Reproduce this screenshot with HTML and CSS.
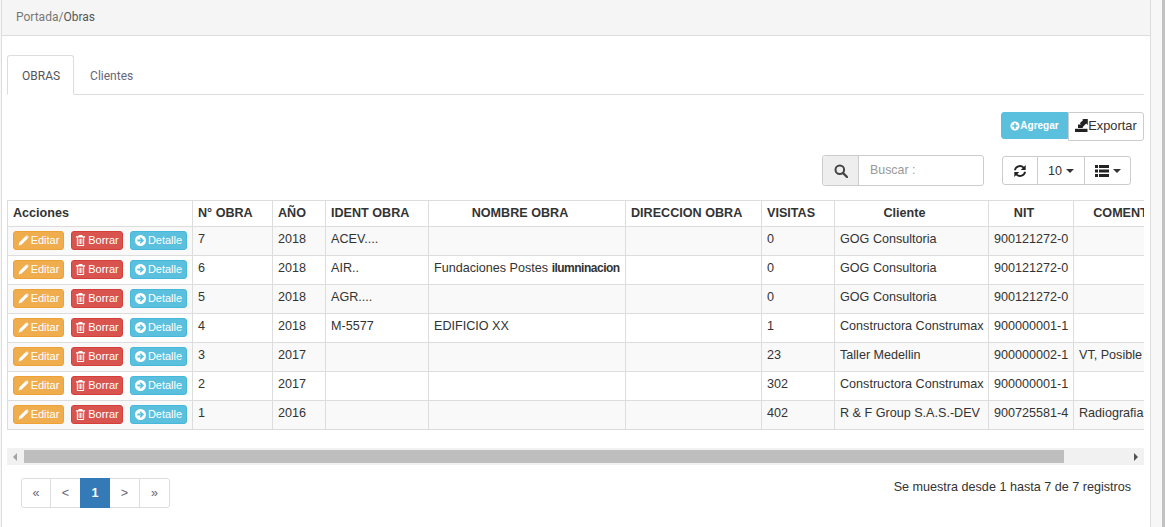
FILE: index.html
```html
<!DOCTYPE html>
<html lang="es">
<head>
<meta charset="utf-8">
<title>Obras</title>
<link rel="stylesheet" href="styles.css">
</head>
<body>
<svg class="defs" aria-hidden="true">
  <symbol id="i-pencil" viewBox="0 0 12 12"><path d="M8.800.8 11.200 3.200 4 10.400 .6 11.400 1.600 8zM9.800.2l2 2-.5.5-2-2z" fill="currentColor"/></symbol>
  <symbol id="i-trash" viewBox="0 0 12 12"><path fill-rule="evenodd" d="M4.200 0h3.600l.7 1.400H11v1.200H10V11a1 1 0 0 1-1 1H3a1 1 0 0 1-1-1V2.600H1V1.400h2.500zM3.100 2.600V10.900H8.900V2.600zM4 4h.9v5.800H4zM5.550 4h.9v5.800h-.9zM7.100 4H8v5.800h-.9z" fill="currentColor"/></symbol>
  <symbol id="i-circle-right" viewBox="0 0 12 12"><path fill-rule="evenodd" d="M6 0a6 6 0 1 1 0 12A6 6 0 0 1 6 0zM6.300 2.400 5.100 3.600 6.600 5H2.600V7H6.600L5.100 8.400 6.300 9.600 9.900 6z" fill="currentColor"/></symbol>
  <symbol id="i-circle-plus" viewBox="0 0 12 12"><path fill-rule="evenodd" d="M6 .5a5.500 5.500 0 1 1 0 11 5.500 5.500 0 0 1 0-11zM5 2.700V5H2.700V7H5V9.300H7V7H9.300V5H7V2.700z" fill="currentColor"/></symbol>
</svg>

<main class="panel">
  <nav class="crumbs"><span class="crumb-link">Portada/</span>Obras</nav>

  <div class="content">
    <ul class="tabs">
      <li class="tab tab-active">OBRAS</li>
      <li class="tab">Clientes</li>
    </ul>

    <div class="actions">
      <button class="add-btn"><svg class="ic-add"><use href="#i-circle-plus"/></svg>Agregar</button>
      <button class="export-btn">
        <svg class="ic-export" viewBox="0 0 13 13"><path d="M0 9.800h12.500V13H0z" fill="currentColor"/><path d="M3 9V5.500H6L4.800 4.300 8.400 0.800 6.800.1H12.800V6L11.200 4.600 7.800 8V9z" fill="currentColor"/></svg>Exportar
      </button>
    </div>

    <div class="tools">
      <div class="search">
        <span class="search-addon"><svg class="ic-search" viewBox="0 0 14 14"><circle cx="5.800" cy="5.800" r="4.300" fill="none" stroke="currentColor" stroke-width="2"/><path d="M9 9l4 4" stroke="currentColor" stroke-width="2.400" stroke-linecap="round"/></svg></span>
        <span class="search-input">Buscar :</span>
      </div>
      <div class="btn-group">
        <span class="tool-btn tool-refresh"><svg class="ic-refresh" viewBox="0 0 14 14"><path d="M1 6.300A6 6 0 0 1 11 2.700L12.700 1V6H7.700L9.700 4A4.200 4.200 0 0 0 2.900 6.300zM13 7.700A6 6 0 0 1 3 11.300L1.300 13V8H6.300L4.300 10A4.200 4.200 0 0 0 11.100 7.700z" fill="currentColor"/></svg></span>
        <span class="tool-btn tool-size">10<i class="caret"></i></span>
        <span class="tool-btn tool-cols"><svg class="ic-list" viewBox="0 0 14 12"><path d="M0 0h3v3H0zM4 0h10v3H4zM0 4.500h3v3H0zM4 4.500h10v3H4zM0 9h3v3H0zM4 9h10v3H4z" fill="currentColor"/></svg><i class="caret"></i></span>
      </div>
    </div>

    <div class="table-scroll">
      <table class="grid">
        <colgroup>
          <col class="c-acc"><col class="c-num"><col class="c-year"><col class="c-ident"><col class="c-name"><col class="c-dir"><col class="c-vis"><col class="c-cli"><col class="c-nit"><col class="c-com">
        </colgroup>
        <thead>
          <tr>
            <th class="left">Acciones</th><th class="left">N° OBRA</th><th class="left">AÑO</th><th class="left">IDENT OBRA</th><th>NOMBRE OBRA</th><th>DIRECCION OBRA</th><th class="left">VISITAS</th><th>Cliente</th><th>NIT</th><th>COMENTARIOS</th>
          </tr>
        </thead>
        <tbody id="rows"></tbody>
      </table>
    </div>

    <div class="hscroll">
      <span class="arrow-left"></span>
      <span class="thumb"></span>
      <span class="arrow-right"></span>
    </div>

    <div class="table-foot">
      <ul class="pager">
        <li>«</li><li>&lt;</li><li class="current">1</li><li class="after-current">&gt;</li><li>»</li>
      </ul>
      <p class="summary">Se muestra desde 1 hasta 7 de 7 registros</p>
    </div>
  </div>
</main>
<script src="app.js"></script>
</body>
</html>
```
FILE: app.js
```js
var data = [
  ["7","2018","ACEV....","","","0","GOG Consultoria","900121272-0",""],
  ["6","2018","AIR..","Fundaciones Postes <b>ilumninacion</b>","","0","GOG Consultoria","900121272-0",""],
  ["5","2018","AGR....","","","0","GOG Consultoria","900121272-0",""],
  ["4","2018","M-5577","EDIFICIO XX","","1","Constructora Construmax","900000001-1",""],
  ["3","2017","","","","23","Taller Medellin","900000002-1","VT, Posible"],
  ["2","2017","","","","302","Constructora Construmax","900000001-1",""],
  ["1","2016","","","","402","R &amp; F Group S.A.S.-DEV","900725581-4","Radiografia"]
];
var actions =
  '<td class="acts">' +
  '<span class="act act-edit"><svg class="ic"><use href="#i-pencil"/></svg>Editar</span>' +
  '<span class="act act-del"><svg class="ic"><use href="#i-trash"/></svg>Borrar</span>' +
  '<span class="act act-info"><svg class="ic"><use href="#i-circle-right"/></svg>Detalle</span>' +
  '</td>';
document.getElementById("rows").innerHTML = data.map(function (r) {
  return "<tr>" + actions + r.map(function (c) { return "<td>" + c + "</td>"; }).join("") + "</tr>";
}).join("");
```
FILE: styles.css
```css
* { box-sizing: border-box; }
html, body { height: 100%; }
body {
  margin: 0;
  padding: 0 11px 0 1px;
  background: #f7f7f7;
  border-right: 3px solid #c1c1c1;
  font-family: "Liberation Sans", Arial, sans-serif;
  font-size: 12.6px;
  color: #333;
  overflow: hidden;
}
.defs { display: none; }
.panel {
  height: 527px;
  background: #fff;
  border-left: 1px solid #ddd;
  border-right: 1px solid #ddd;
  overflow: hidden;
}
.crumbs {
  height: 36px;
  padding: 10px 14px;
  font-family: Roboto, "Liberation Sans", sans-serif;
  font-size: 12px;
  line-height: 15px;
  background: #f5f5f5;
  border-bottom: 1px solid #ddd;
  color: #555;
}
.crumb-link { color: #777; }
.content { padding: 19px 6px 0 4px; }
.tabs {
  display: flex;
  list-style: none;
  margin: 0 0 0 1px;
  padding: 0;
  height: 40px;
  border-bottom: 1px solid #ddd;
  font-family: Roboto, "Liberation Sans", sans-serif;
  font-size: 12px;
}
.tab {
  padding: 13px 13px 0 14px;
  height: 40px;
  color: #667;
  border: 1px solid transparent;
  line-height: 15px;
}
.tab + .tab { padding-left: 15px; }
.tab-active {
  color: #555;
  background: #fff;
  border-color: #ddd #ddd #fff;
  border-radius: 3px 3px 0 0;
}
.actions {
  display: flex;
  justify-content: flex-end;
  margin-top: 17px;
  height: 30px;
}
button { font-family: inherit; }
.add-btn {
  width: 67px;
  height: 27px;
  border: 1px solid #5bc0de;
  border-radius: 3px 0 0 3px;
  background: #5bc0de;
  color: #fff;
  font-size: 10px;
  font-weight: bold;
  padding: 0;
  display: flex;
  align-items: center;
  justify-content: center;
}
.ic-add { width: 10px; height: 10px; }
.export-btn {
  width: 76px;
  height: 29px;
  border: 1px solid #ccc;
  border-radius: 0 3px 3px 0;
  background: #fff;
  color: #333;
  font-size: 12.8px;
  padding: 0 0 2px;
  display: flex;
  align-items: center;
  justify-content: center;
}
.ic-export { width: 13px; height: 13px; color: #222; }
.tools {
  display: flex;
  justify-content: flex-end;
  margin-top: 13px;
  padding-right: 13px;
  height: 31px;
}
.search {
  display: flex;
  width: 162px;
  height: 31px;
  margin-right: 18px;
  border: 1px solid #ccc;
  border-radius: 3px;
}
.search-addon {
  width: 36px;
  background: #eee;
  border-right: 1px solid #ccc;
  display: flex;
  align-items: center;
  justify-content: center;
  color: #444;
  border-radius: 3px 0 0 3px;
}
.ic-search { width: 14px; height: 14px; }
.search-input {
  padding: 0 11px;
  line-height: 28px;
  color: #999;
  font-size: 12.4px;
}
.btn-group {
  display: flex;
  height: 29px;
  margin-top: 1px;
  border: 1px solid #ccc;
  border-radius: 3px;
}
.tool-btn {
  display: flex;
  align-items: center;
  justify-content: center;
  border-left: 1px solid #ccc;
  font-size: 12.6px;
}
.tool-refresh { width: 34px; border-left: 0; }
.tool-size { width: 47px; }
.tool-cols { width: 46px; }
.ic-refresh { width: 14px; height: 14px; color: #222; }
.ic-list { width: 14px; height: 12px; color: #222; }
.caret {
  margin-left: 4px;
  border-top: 4px solid #333;
  border-left: 4px solid transparent;
  border-right: 4px solid transparent;
}
.table-scroll {
  margin-top: 14px;
  height: 248px;
  padding-left: 1px;
  overflow: hidden;
}
.grid {
  border-collapse: collapse;
  table-layout: fixed;
  width: 1213px;
  font-size: 12.6px;
  color: #333;
}
.c-acc { width: 185px; }
.c-num { width: 80px; }
.c-year { width: 53px; }
.c-ident { width: 103px; }
.c-name { width: 197px; }
.c-dir { width: 136px; }
.c-vis { width: 73px; }
.c-cli { width: 154px; }
.c-nit { width: 85px; }
.c-com { width: 147px; }
.grid th, .grid td {
  border: 1px solid #ddd;
  line-height: 17px;
  vertical-align: top;
  white-space: nowrap;
  overflow: hidden;
}
.grid th {
  text-align: center;
  font-weight: bold;
  height: 26px;
  padding: 4px 19px 3px 5px;
  color: #333;
}
.grid th.left { text-align: left; padding-right: 5px; }
.grid td { height: 29px; padding: 4px 5px 3px; }
.grid tbody tr:nth-child(odd) { background: #f9f9f9; }
.grid b { font-weight: bold; font-size: 12px; letter-spacing: -.5px; }
.grid td.acts { padding: 4px 5px 0; font-size: 0; }
.act {
  display: inline-flex;
  align-items: center;
  justify-content: center;
  height: 19px;
  font-size: 11px;
  color: #fff;
  border-radius: 3px;
  border: 1px solid;
  vertical-align: top;
}
.act + .act { margin-left: 7px; }
.ic { width: 11px; height: 11px; margin-right: 2px; }
.act-edit { width: 51px; background: #f0ad4e; border-color: #eea236; }
.act-del { width: 52px; background: #d9534f; border-color: #d43f3a; }
.act-info { width: 57px; background: #5bc0de; border-color: #46b8da; }
.hscroll {
  display: flex;
  align-items: center;
  height: 17px;
  margin-left: 1px;
  background: #f1f1f1;
}
.arrow-left, .arrow-right {
  width: 0;
  height: 0;
  border-top: 4px solid transparent;
  border-bottom: 4px solid transparent;
}
.arrow-left { margin-left: 6px; margin-right: 7px; border-right: 4px solid #a3a3a3; }
.arrow-right { margin-left: 70px; border-left: 4px solid #505050; }
.thumb { width: 1040px; height: 13px; background: #bebebe; }
.table-foot {
  display: flex;
  justify-content: space-between;
  padding: 13px 13px 0 15px;
}
.pager {
  display: flex;
  list-style: none;
  margin: 0;
  padding: 0;
  height: 30px;
  border: 1px solid #ddd;
  border-radius: 3px;
  color: #667;
}
.pager li {
  width: 30px;
  text-align: center;
  line-height: 28px;
  border-left: 1px solid #ddd;
}
.pager li:first-child { border-left: 0; width: 28px; }
.pager .current {
  background: #337ab7;
  color: #fff;
  font-weight: bold;
  border-left: 0;
  margin: -1px 0;
  height: 30px;
  line-height: 30px;
}
.pager .after-current { border-left: 0; width: 29px; }
.summary { margin: 1px 0 0; line-height: 17px; color: #333; }
```
